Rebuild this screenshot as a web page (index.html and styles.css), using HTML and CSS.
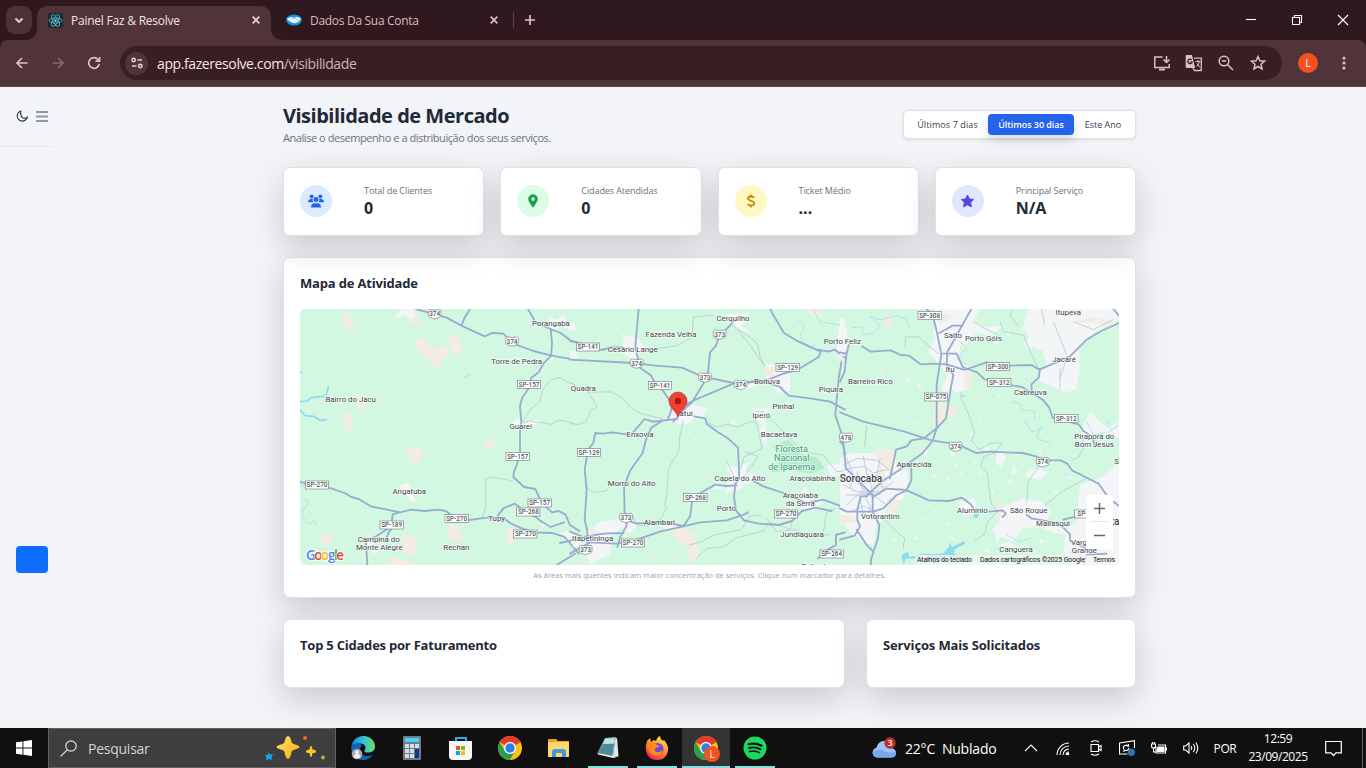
FILE: index.html
```html
<!DOCTYPE html>
<html lang="pt-BR">
<head>
<meta charset="utf-8">
<title>Painel Faz &amp; Resolve</title>
<link rel="stylesheet" href="styles.css">
</head>
<body>
<svg width="0" height="0" class="defs">
  <defs>
    <symbol id="chrome" viewBox="0 0 24 24">
      <circle cx="12" cy="12" r="12" fill="#fbc116"/>
      <path d="M12 12 1.600 6A12 12 0 0 1 22.400 6Z" fill="#e33b2e"/>
      <path d="M1.600 6A12 12 0 0 0 11.800 24L17 15 12 12 6.800 15Z" fill="#289f4b"/>
      <path d="M12 6H22.400L12 12Z" fill="#e33b2e"/>
      <circle cx="12" cy="12" r="6" fill="#fff"/>
      <circle cx="12" cy="12" r="4.700" fill="#2f7de9"/>
    </symbol>
    <g id="sh"><path d="M-19-9Q-17-14-13-13Q0-10 13-13Q17-14 19-9Q20 2 18 7Q15 12 9 12L0 15-9 12Q-15 12-18 7Q-20 2-19-9Z"/></g>
    <g id="sp"><rect x="-35" y="-12" width="70" height="24"/></g>
  </defs>
</svg>

<header class="tabs">
  <div class="tab-search"><svg width="10" height="7" viewBox="0 0 10 7"><path d="m1.500 1.500 3.500 3.500 3.500-3.500"/></svg></div>
  <div class="tab active">
    <svg width="15" height="15" viewBox="0 0 15 15"><rect width="15" height="15" rx="2" fill="#20282c"/><g fill="none" stroke="#4fb3cc" stroke-width=".9"><ellipse cx="7.500" cy="7.500" rx="6.500" ry="2.500"/><ellipse cx="7.500" cy="7.500" rx="6.500" ry="2.500" transform="rotate(60 7.500 7.500)"/><ellipse cx="7.500" cy="7.500" rx="6.500" ry="2.500" transform="rotate(120 7.500 7.500)"/></g><circle cx="7.500" cy="7.500" r="1.200" fill="#6fd6ee"/></svg>
    <span class="tab-title t1">Painel Faz &amp; Resolve</span>
    <svg class="x" width="8" height="8" viewBox="0 0 8 8"><path d="m.7.7 6.600 6.600m0-6.600L.7 7.300"/></svg>
  </div>
  <div class="tab second">
    <svg width="16" height="12" viewBox="0 0 16 12"><ellipse cx="8" cy="6" rx="7.800" ry="5.600" fill="#1592eb"/><path d="M.8 4.800 5 3l3 .7L11 2.800l4 1.700-2 3-3.500 1.700-3-.2-3.500-2Z" fill="#eaf6ff"/><path d="m6 5 3-1 4 3" fill="none" stroke="#7cb6e0" stroke-width=".7"/></svg>
    <span class="tab-title t2">Dados Da Sua Conta</span>
    <svg class="x" width="8" height="8" viewBox="0 0 8 8"><path d="m.7.7 6.600 6.600m0-6.600L.7 7.300"/></svg>
  </div>
  <i class="sep"></i>
  <svg class="plus" width="10" height="10" viewBox="0 0 10 10"><path d="M5 0v10M0 5h10"/></svg>
  <div class="win">
    <svg viewBox="0 0 12 12"><path d="M1 5.500h10"/></svg>
    <svg viewBox="0 0 12 12"><path d="M1.500 3.500h7v7h-7zM3.500 3.500v-2h7v7h-2"/></svg>
    <svg viewBox="0 0 12 12"><path d="m1 1 10 10M11 1 1 11"/></svg>
  </div>
</header>

<nav class="toolbar">
  <svg class="nav" viewBox="0 0 16 16"><path d="M13.500 8H3M8 3 3 8l5 5"/></svg>
  <svg class="nav off" viewBox="0 0 16 16"><path d="M2.500 8H13M8 3l5 5-5 5"/></svg>
  <svg class="nav" viewBox="0 0 16 16"><path d="M13.200 9A5.300 5.300 0 1 1 12 4.500L13.500 6M13.600 2v4.200H9.500"/></svg>
  <div class="address">
    <div class="site"><svg width="12" height="12" viewBox="0 0 12 12"><circle cx="2.700" cy="3" r="1.700"/><path d="M6.500 3H11M1 9h4.500"/><circle cx="9.300" cy="9" r="1.700"/></svg></div>
    <span class="url">app.fazeresolve.com<span>/visibilidade</span></span>
    <div class="actions">
      <svg viewBox="0 0 18 18"><path d="M9.500 3H1.800v10.500h14.400V10M13.500 2v6M10.500 5.500l3 3 3-3"/><path d="M6 15.500h6" stroke-width="2"/></svg>
      <svg viewBox="0 0 18 18"><path d="M1.500 1H7l3.200 13H1.500Q.7 14 .7 13V2Q.7 1 1.500 1Z" fill="#d8c2c5" stroke="none"/><path d="M9 4.200h7.300v12.300H9.500L8 14" stroke-width="1.300"/><path d="M6.600 5.800A2.200 2.200 0 1 0 7.200 8H5.200" stroke="#381f24" stroke-width="1.200"/><path d="M10.500 7.500h5M13 6v1.500m1.500 0q-.5 3-3 5m.5-3 3 4" stroke-width="1"/></svg>
      <svg viewBox="0 0 18 18"><circle cx="7" cy="7" r="4.800"/><path d="m10.500 10.500 5.500 5.500M4.800 7h4.400"/></svg>
      <svg viewBox="0 0 18 18"><path d="m9 2.500 1.900 4.300 4.700.4-3.600 3.100 1.100 4.700L9 12.500 4.900 15 6 10.300 2.400 7.200l4.700-.4Z"/></svg>
    </div>
  </div>
  <div class="avatar">L</div>
  <svg class="dots" width="4" height="14" viewBox="0 0 4 14"><circle cx="2" cy="2" r="1.600"/><circle cx="2" cy="7" r="1.600"/><circle cx="2" cy="12" r="1.600"/></svg>
</nav>

<div class="page">
  <aside>
    <div class="side-top">
      <svg width="12" height="12" viewBox="0 0 12 12" fill="none" stroke="#29303c" stroke-width="1.100"><path d="M4.800.9A5.200 5.200 0 1 0 11.400 7.300Q9 8.700 7 8Q4 6.500 4.800.9Z"/></svg>
      <svg width="12" height="11" viewBox="0 0 12 11" stroke="#8e99ab" stroke-width="1.900"><path d="M0 1h12M0 5.500h12M0 10h12"/></svg>
    </div>
    <div class="blue"></div>
  </aside>
  <main>
    <div class="head">
      <div><h1>Visibilidade de Mercado</h1><p>Analise o desempenho e a distribuição dos seus serviços.</p></div>
      <div class="range"><span>Últimos 7 dias</span><span class="on">Últimos 30 dias</span><span>Este Ano</span></div>
    </div>
    <section class="stats">
      <div class="card stat"><div class="ic blue-ic"><svg width="16" height="14" viewBox="0 0 16 14" fill="#2563eb"><circle cx="3.600" cy="2.400" r="2"/><circle cx="12.400" cy="2.400" r="2"/><circle cx="8" cy="5.500" r="2.500"/><path d="M0 8.300C0 6 1.300 5 3 5h1.700Q4.200 7 5.600 8.300ZM16 8.300C16 6 14.700 5 13 5h-1.700q.5 2-.9 3.300ZM3 13.500c0-3 1.400-4.300 3.300-4.300h3.400c1.900 0 3.300 1.300 3.300 4.300Z"/></svg></div><div><p>Total de Clientes</p><b>0</b></div></div>
      <div class="card stat"><div class="ic green-ic"><svg width="10" height="14" viewBox="0 0 10 14"><path fill="#16a34a" fill-rule="evenodd" d="M5 .3A4.800 4.800 0 0 1 9.800 5C9.800 7.500 7 11 5 13.800 3 11 .2 7.500.2 5A4.800 4.800 0 0 1 5 .3Zm0 3a1.800 1.800 0 1 0 0 3.600 1.800 1.800 0 0 0 0-3.600Z"/></svg></div><div><p>Cidades Atendidas</p><b>0</b></div></div>
      <div class="card stat"><div class="ic yellow-ic"><svg width="10" height="14" viewBox="0 0 10 14" fill="none" stroke="#ca8a04" stroke-width="1.800"><path d="M5 .5v2M5 11.500v2M8.300 3.500C6 2 2 2 2 4.600S8.300 6.500 8.300 9.200 4 12 1.500 10.300"/></svg></div><div><p>Ticket Médio</p><b>...</b></div></div>
      <div class="card stat"><div class="ic indigo-ic"><svg width="15" height="14" viewBox="0 0 15 14"><path fill="#4f46e5" stroke="#4f46e5" stroke-linejoin="round" d="m7.500 1 1.900 3.900 4.300.6-3.100 3 .8 4.300-3.900-2-3.900 2 .8-4.300-3.100-3 4.300-.6Z"/></svg></div><div><p>Principal Serviço</p><b>N/A</b></div></div>
    </section>
    <section class="card map-card">
      <h2>Mapa de Atividade</h2>
      <svg class="map" viewBox="300 309 819 256">
        <rect x="300" y="309" width="819" height="256" fill="#d3f8e2"/>
        <g transform="translate(300 305) scale(.33333)">
          <path class="tan" d="M126 30q10-12 24 0l10 24q8 26-10 26-14-6-24-36ZM345 112q4-16 26-12 15 10 25 32l14-4q10-10 24-6l12 12q-4 20-18 34-10 20-24 18-14-26-30-30-22-16-29-24ZM446 95q14-10 30 0l10 30q-10 30-24 26l-10-24ZM174 275q20-14 26 2l-8 42q-16 8-20-8ZM128 328q20-10 32 10-8 30 0 38l-18 2q-16-26-14-50ZM320 430l40-2 10 26-28 30q-22-14-22-54ZM542 426l26-32 24 40-22-6ZM66 690q14-10 32 2-4 32-24 34-20-20-8-36ZM448 658l30 5 4 24 14 10-40 16-12-20ZM304 690q40-4 50 16 0 40-18 50l-24-12ZM618 670h24v48h-24ZM260 780l20-30 20 16 30 0 12 14ZM320 12h24l18 46-34-6Z"/>
          <path class="urban" d="M284 34 310 10h26l10 24-24 6-10-10-20 10ZM302 540l20-6 14 20 10 34-14 2-12-22-22-4ZM196 702q30 10 42 36l-18 8-22-20ZM746 36l24 8 20-14 10 20 25 4v24l-44-14-26 14ZM744 150h16v16h-16ZM648 342l24 10 44-8 2 12-44 8-16 16-24-20ZM780 684l22-6 20 10v30l-24-12ZM724 658l24-4 4 8-24 4Z"/>
          <path class="water" d="M0 290l22-2 12-10 36-4 10-8 5-20M0 314l16 18 24 2 20 12 20-2M0 204l6-2"/>
          <path class="creek" d="M0 545l20-4 20 6M10 580l14 8-6 20-12 4 4 26 18 20 14-10 10 14"/>
          <path class="minor" d="M665 355l28-44 26-20 10-38 22-28 30-8 20 14 24 8M670 355l20-8 14 4 30 3 20 4 20-12 30 4 20 6M545 640l12-30V522l20-5 40 6 20 6M494 218l16-8"/>
          <path class="road" d="M348 12 440 38 484 62 554 94 576 84 610 86 640 116 700 138 755 152 825 164M510 12 494 38 484 62M684 12 708 54 752 72 756 112 754 150M752 72l30 12 32 24 14 4M754 152l-24 24-14 26-22 16-8 32-20 30-6 24 4 48-4 26 0 66-10 36-8 20-2 16 32 30 34 6 18 40 32 30 20-4 20 10 14 32 28 18M0 530l18 6 68 12 48 16 20 12 22 6 36 22 50 10 38 8 34-8 40 4 40-4 24 4 22 18 40 10 60-8 46-2 24 18 30 14 40 14 56 2 38 12 42 50M298 622l-20 6-4 36-36 24-40 24 4 66M260 698l6-16 14-18M592 634l18-24 34-14 40 30 24 10 14 12 30 18 40-14M770 780l55-34M780 714l45-10" />
        </g>
        <g transform="translate(570 305) scale(.33333)">
          <path class="urban" d="M154 88l50 10 24 36-20 10-10 28-14-12-40-22 18-26ZM0 138h24v24H0ZM466 28l74-4-26 38 42 30-50-20ZM586 178h44l4 18 26 8v54h-24l-10 10-20-30-26-6-60 26 0-14 66-24ZM810 40h15v130l-26-28ZM300 330l14-26 56-4 44 10-14 20-26 8-20 20-68-6ZM480 510l-14-34 36 14 34-20-10 28 34 14-20 24-20 0 0 12-52 16ZM590 430l-24-50 10-16-14-20-4-16 26-14 4 30ZM88 652l50-10 30 10-40 40-8 56-24 10-36 20-14-40-40-14ZM680 590l24-46 28 30 26 18-30 28-40-10ZM276 664l44-4 6 14-30 6ZM432 540l30 0 2 12-30 0ZM770 480l55-6v40l-44-4ZM150 664l60-20-30 44ZM500 640l20-10 6 8ZM480 350l16-4-4 14ZM442 394l28-14-8 14ZM540 310l60 0-20 24ZM640 460l30-10-5 14ZM370 400l12 0-4 10Z"/>
          <path class="tan" d="M308 676l42-8 30 28 4 60-30 22 0-50-40-26ZM586 186l28-2 0 30-24 0ZM700 12h44l16 30-30-10ZM792 150l30 8v20ZM30 780l10-18 16 18ZM40 664l50 16-12 20Z"/>
          <path class="park" d="M612 424l40-20 20 14 20 30 50 10 22 32-40 16-60-10-60 6 24-34Z"/>
          <path class="creek" d="M684 44l20 20-14 30 30 40 20-20M730 14l20 36 60 10"/>
          <path class="minor" d="M490 60 540 120 560 150 582 180M504 72l58 42 8 40 14 30M0 232l24 14 34 15 68 0 34 20 20 26 36 20 60 14M340 350l-10 40-4 50-30 50-6 80-6 30 6 10-20 34-40 20-30-6-12-26-24-10M410 350l30 16 34-8 26 8 44-16 14 0 8 30 10 50-54 26-10 34M560 320l20 0 60 60 60 60 60 10 40 50 65-8M0 356l28 2 20-8 14-34 20-10-30-48M370 36l60-6M370 36l-4 60-44 26-100 14M524 440l40 14-40 60M44 540l24 22 40-4 16-20-14-10M358 720l36-10 40-20 80-16 24-40 34-4M380 760l30-30 50-4 40-28 80-20 20-26 60 20 10-36M470 470l20 40M590 640l30 40 60-6 40 24 60-10M760 680l10-60 26-10"/>
          <path class="road" d="M0 164l190 10 66 8 80 6 60 26 94 20 90-4 60-24 40-10 66-40 6-16-74-34-36-22-30-50-12-24M0 108l24 5 70 22 30-8 34 0M206 12l-4 44-6 70 14 62 34 24 14 30 22 16 26 40-4 24-10 24 M490 50l-14 16-28 26-10 30-18 20-6 60-14 34-34 56-16 14-40 44M342 302l30-16 118-50 80-10 60 20 26 26 64 8 60 10 45 24M372 334l34 6 4 16 34 26 30 18 30 28 4 90-12 18-4 40 6 40 24 30 44 10 60 4 40-12 30-30 40-10 49 10M548 526l32 18 60 20 70 30 50-10 65 24M322 342l-74 8-24-8-40 46-14 0-42-6-28 4-24-2-6 30-16 20-10 60 6 60-6 90 8 34 0 40M276 348l-32 20-16 36-10 40-36 50-20 50 2 80 6 38-20 36-8 28M0 746l60-34 80 4 60-12 70-24 70-16 50-12 80-6 50-16 14-8M168 645l30 10 86-2 56 10 20-28 6-44 30-30 40-22 30 4 34-2M745 134l30 6 20-6 30 24M820 140l-14 80-10 110 20 60 9 60M744 760l20-20 34-20 0-30 27-8M0 680l40 16 60-10 60-2"/>
        </g>
        <g transform="translate(840 305) scale(.33333)">
          <path class="urban" d="M0 60l20 10 4 60-10 20-14-8ZM280 12h140l-20 34 30 20 60-4-40 30-40-10-30 34-20 8 0 40 34 30 0 54-44 14-16-10-12 20-18-24 20-36-34-44-26-26 20-40ZM566 12H837v30l-90 50-30 40 2 60-10 60-30 10-60-24-20-10 0-30 20-20-10-40-60-20 20-20-20-30ZM0 460l30-16 70 0 20-10 40 4 12 40 30 20 4 40-20 50-40 10-20 50-40 10-10 40-40-8-36-50ZM720 540l60-20 57-50v310H700l-30-40 10-70 30-20ZM480 610l66-30 60 10 26 30-16 44 60-4 6 34-80-26-50 0-30 40-40-12-10 20-14-44 20-20ZM354 590l50-10 6 40-40 14ZM474 430l24 24-14 36-18-20ZM520 480l14 20-20 10ZM556 504l32-14 34 10-20 24-40-6ZM340 480l14 0-8 10ZM276 510l10 10 0-14ZM250 430l16 6-12 20ZM430 430l10-14 16 30ZM330 434l16 12-10 12ZM364 570l16 2-6 12ZM730 360l20-40 50 50 37-20v50l-70-20-36 40ZM500 530l20-10-10 20ZM390 380l12 10-16 6ZM230 40l20-14 16 10ZM470 720l40-10 20 20ZM40 640l70 10-10 70-40-10ZM196 220l20 6-10 8ZM230 240l16 0-6 12Z"/>
          <path class="specks" d="M420 330l6 8-8 2ZM230 470l12 4-8 6ZM300 455l8 2-4 8ZM240 540l10-4 2 8ZM320 520l14-6-6 12ZM360 500l8 6-10 4ZM400 470l12-2-6 10ZM420 500l10 8-10 4ZM450 560l10-8 2 12ZM410 540l8 0-4 8ZM120 200l10 2-6 8ZM60 180l8 2-6 6ZM160 330l10 0-6 8ZM200 380l14 2-8 6ZM230 350l8 6-10 2ZM70 320l8 4-8 4ZM440 230l14 4-8 8ZM470 270l12-4 0 10ZM500 80l14 6-10 10ZM540 70l10-2 2 12ZM460 110l14-4-4 12ZM560 120l14 10-14 2ZM490 150l10-4 2 8ZM550 210l8 4-8 6ZM250 640l12 4-12 6ZM220 700l14-6-2 12ZM160 700l10 6-12 6ZM280 620l8-6 4 10ZM320 650l10 6-10 4ZM330 700l12-4 2 8ZM430 740l14-10 4 14ZM600 700l14 8-14 8ZM570 740l10-10 8 12ZM640 560l16-6-6 14ZM680 520l10-10 6 12ZM630 470l12-2-6 10ZM530 440l10 8-10 6ZM590 440l14-6-2 12Z"/>
          <path class="tan" d="M126 30l30 0 4 40-24-14ZM296 24h24l20 16-40 14ZM376 198l20 6v50l-24-10ZM286 284l30 20 44 6-20 24-32 6 0 30-30-20ZM96 440l50-10 20 10-14 70-24-30ZM120 470l20 50-16 50-28-20ZM142 580l40 4-8 30-30 20ZM0 630l40 4 16 20-40 0-16 8ZM700 50l60-14 60 14 10 24-60-20ZM474 580l16 40-16 30-10-30ZM680 740l30-10-4 24ZM370 620l20 10-14 10ZM0 140l10 6v30l-10-16Z"/>
          <path class="waterfill" d="M184 750l20-10 4 16 44-10 30 2 30-4 16-20 0-14 8 16 36-18 4 8-30 16-6 12 24 16-20 4-20-12-20 8-10 16-16 0 0-20-30-8-20 14-30-2-6 16H190ZM398 636l8-10 12 2-6 10Z"/>
          <path class="creek" d="M40 68l26-2 4 24 30-6 20-20-30-30 30 10 50-12 30 10 10 30M360 110l20 20-30 30 30 20M518 290l20 4 10 20 36 6 0 20M556 350l20 30 30-10M600 370l-10 30 40 14M740 350l20 40 50-10 27-20M800 350l14 24 20-14M500 690l40 20 30-10"/>
          <path class="minor" d="M196 126l0-30 40 0 30 26 30 24M360 264l14 10-14 0 24 50 20 60-10 24 24 26 34-20 34 0-20 30-34 10-10 30 20 20 8 66 4 28 20 20-30 30-10 40-30 20M480 50l10 30 60 10 30 70 14 30M560 590l4-60 24-34 20-24M696 466l20-10 14-24 0-30M616 600l50-40 74-40M400 50l34 20 40 20-20 24M80 364l-6 60M130 640l30 30 34 30-4 30M640 50l20 50 20 50M700 50l60 24 60-30M680 160l-20 60M604 10l10 50M520 12l-10 20 24 30M660 190l0 60"/>
          <path class="street" d="M0 500l30-10 40-6 30 20 40-10M10 540l40 20 70 0 40-30M20 600l40-36 60 4M50 500l20 64 20 40 0 30M70 454l10 50 20 60M20 570l80 0 40 30M40 520l60 60M10 480l40-20 60 6 40 30M10 520l30-10 30 20 40-10M20 460l20 50-10 40M120 460l-10 50 20 40M30 620l40-16 30 10M60 580l10 50"/>
          <path class="road" d="M260 12l20 26 10 40 14 70-14 90 0 130-12 40-30 36-60 44-60 40-46 42M394 12 376 44 354 84 334 120 322 140 320 180 340 210 334 240 318 340 290 370 252 400 214 406 200 424 168 434 164 456 150 520M298 84l40-22 30 0M310 146l40 0 18 40 14 6M0 322l70 28 124 30 80 26 80 12 54 26 40-4 100 4 40 10 20 12 54 0 20 10 14 20 40 20 40 20 28 40M66 124l26 16 60-4 30 14 26 2 34 26 40-2 38 2 50 16 18-2M382 192l40-14 18-6 60 10 74-2 24 14 92-40 50-50 44-26 53-24M600 192l-4 26-22 20 2 26 32 20 20 24 10 30 78 20 14 20 26 16 10 32M382 192l30 10 20 20 14 6 40 8 60 10 30 18M0 410l10 10 8 70 30 30 50 50 0 50 20 40-4 40-20 60-6 60M82 574l-20 0-10 40 0 30 8 20-16 28-44 12M50 674l30 46 20 20M0 610l20 10 80 0 30-10 40-40 30-14 36 16 30 14 60 2 40-10 26 20 14 20M448 620l40-4 10 10-10 10M100 575l40-24 60 4 14-30 0-40-30-10M560 630l14 10 76 14 20 14 20 20 0 20 54 24M0 142l20 4 6-26M20 140l-6 60-14 30M670 644l80-20M820 12l17 20M730 780l10-30 60-4M820 590l17 12"/>
        </g>
        <g class="shield" transform="translate(300 305) scale(.33333)">
          <use href="#sh" x="404" y="27"/><use href="#sh" x="636" y="109"/><use href="#sp" x="687" y="238"/><use href="#sp" x="653" y="454"/><use href="#sp" x="719" y="594"/><use href="#sp" x="685" y="621"/><use href="#sp" x="676" y="687"/><use href="#sp" x="470" y="641"/><use href="#sp" x="275" y="660"/><use href="#sp" x="51" y="540"/>
          <use href="#sp" x="864" y="126"/><use href="#sh" x="1010" y="175"/><use href="#sh" x="1259" y="88"/><use href="#sp" x="1080" y="242"/><use href="#sh" x="1215" y="217"/><use href="#sh" x="1322" y="239"/><use href="#sp" x="1463" y="188"/><use href="#sp" x="867" y="442"/><use href="#sp" x="1186" y="578"/><use href="#sh" x="978" y="638"/><use href="#sh" x="857" y="734"/><use href="#sp" x="999" y="714"/><use href="#sp" x="1458" y="627"/><use href="#sp" x="1595" y="747"/>
          <use href="#sp" x="1889" y="32"/><use href="#sp" x="2094" y="184"/><use href="#sp" x="2098" y="232"/><use href="#sp" x="1908" y="276"/><use href="#sh" x="1638" y="397"/><use href="#sh" x="1967" y="424"/><use href="#sh" x="2228" y="471"/><use href="#sp" x="2299" y="341"/><use href="#sp" x="2359" y="627"/>
        </g>
        <g class="num" transform="translate(300 312) scale(.33333)">
          <text x="404" y="13">374</text><text x="636" y="95">374</text><text x="687" y="224">SP-157</text><text x="653" y="440">SP-157</text><text x="719" y="580">SP-157</text><text x="685" y="607">SP-268</text><text x="676" y="673">SP-270</text><text x="470" y="627">SP-270</text><text x="275" y="646">SP-189</text><text x="51" y="526">SP-270</text>
          <text x="864" y="112">SP-141</text><text x="1010" y="161">374</text><text x="1259" y="74">373</text><text x="1080" y="228">SP-141</text><text x="1215" y="203">373</text><text x="1322" y="225">374</text><text x="1463" y="174">SP-129</text><text x="867" y="428">SP-129</text><text x="1186" y="564">SP-268</text><text x="978" y="624">373</text><text x="857" y="720">373</text><text x="999" y="700">SP-270</text><text x="1458" y="613">SP-270</text><text x="1595" y="733">SP-264</text>
          <text x="1889" y="18">SP-308</text><text x="2094" y="170">SP-300</text><text x="2098" y="218">SP-312</text><text x="1908" y="262">SP-075</text><text x="1638" y="383">478</text><text x="1967" y="410">374</text><text x="2228" y="457">374</text><text x="2299" y="327">SP-312</text><text x="2347" y="613">SP-</text>
        </g>
        <g class="label" transform="translate(300 305) scale(.33333)">
          <text x="753" y="64">Porangaba</text><text x="650" y="176">Torre de Pedra</text><text x="152" y="292">Bairro do Jacu</text><text x="662" y="373">Guareí</text><text x="328" y="566">Angatuba</text><text x="590" y="649">Tupy</text><text x="236" y="711">Campina do</text><text x="238" y="735">Monte Alegre</text><text x="469" y="735">Rechan</text>
          <text x="1299" y="47">Cerquilho</text><text x="1113" y="96">Fazenda Velha</text><text x="998" y="140">Cesário Lange</text><text x="850" y="258">Quadra</text><text x="1401" y="238">Boituva</text><text x="1593" y="262">Piquira</text><text x="1450" y="311">Pinhal</text><text x="1384" y="338">Iperó</text><text x="1437" y="395">Bacaetava</text><text x="1152" y="334">Tatuí</text><text x="1020" y="397">Enxovia</text><text x="995" y="543">Morro do Alto</text><text x="1320" y="529">Capela do Alto</text><text x="1537" y="529">Araçoiabinha</text><text x="1501" y="579">Araçoiaba</text><text x="1501" y="602">da Serra</text><text x="1279" y="617">Porto</text><text x="1078" y="659">Alambari</text><text x="878" y="709">Itapetininga</text><text x="1506" y="697">Jundiaquara</text><text x="1627" y="117">Porto Feliz</text>
          <text x="2305" y="30">Itupeva</text><text x="1959" y="100">Salto</text><text x="2050" y="107">Porto Góis</text><text x="1950" y="202">Itu</text><text x="1711" y="238">Barreiro Rico</text><text x="2292" y="171">Jacaré</text><text x="2191" y="270">Cabreúva</text><text x="2383" y="401">Pirapora do</text><text x="2383" y="425">Bom Jesus</text><text x="1842" y="487">Aparecida</text><text x="1741" y="641">Votorantim</text><text x="2017" y="625">Alumínio</text><text x="2186" y="625">São Roque</text><text x="2259" y="663">Mailasqui</text><text x="2148" y="741">Canguera</text><text x="2337" y="721">Varg</text><text x="2353" y="745">Grande</text><text x="2450" y="476">S</text><text x="2445" y="660" class="big">ta</text>
          <text x="1683" y="531" class="big">Sorocaba</text>
          <g class="forest"><text x="1475" y="441">Floresta</text><text x="1475" y="468">Nacional</text><text x="1475" y="496">de Ipanema</text></g>
          <text x="1546" y="792">Salto de</text>
        </g>
        <path d="M678 417c-1.500-6-9-9-9-16a9 9 0 0 1 18 0c0 7-7.500 10-9 16Z" fill="#ea4335" stroke="#c5221f" stroke-width=".6"/><circle cx="678" cy="401" r="3.200" fill="#b31412"/>
        <rect x="915" y="555" width="204" height="10" fill="#f5f5f5" opacity=".7"/>
        <g class="credits"><text x="917" y="562.300" textLength="55">Atalhos do teclado</text><text x="980" y="562.300" textLength="105">Dados cartográficos ©2025 Google</text><text x="1093" y="562.300" textLength="22">Termos</text></g>
        <g class="google"><text x="306" y="559.500" textLength="38"><tspan fill="#4285f4">G</tspan><tspan fill="#ea4335">o</tspan><tspan fill="#fbbc04">o</tspan><tspan fill="#4285f4">g</tspan><tspan fill="#34a853">l</tspan><tspan fill="#ea4335">e</tspan></text></g>
        <rect x="1086" y="495" width="27" height="54" rx="1" fill="#fff"/>
        <path d="M1090 521.500h19" stroke="#e6e6e6"/><path d="M1094 508.500h11M1099.500 503v11M1094 535.500h11" stroke="#666" stroke-width="1.500"/>
      </svg>
      <p class="note">As áreas mais quentes indicam maior concentração de serviços. Clique num marcador para detalhes.</p>
    </section>
    <section class="bottom">
      <div class="card"><h2>Top 5 Cidades por Faturamento</h2></div>
      <div class="card"><h2>Serviços Mais Solicitados</h2></div>
    </section>
  </main>
</div>

<footer class="taskbar">
  <div class="start"><svg width="16" height="16" viewBox="0 0 16 16" fill="#fff"><path d="M0 2.300 6.500 1.400V7.600H0ZM7.400 1.200 16 0V7.600H7.400ZM0 8.500H6.500V14.700L0 13.800ZM7.400 8.500H16V16L7.400 14.800Z"/></svg></div>
  <div class="search">
    <svg width="17" height="17" viewBox="0 0 17 17" fill="none" stroke="#e4e4e4" stroke-width="1.200"><circle cx="11" cy="6" r="5.200"/><path d="M7.200 9.800.7 16.300"/></svg>
    <span>Pesquisar</span>
    <svg class="spark" width="62" height="26" viewBox="0 0 62 26"><defs><linearGradient id="gold" x1="0" y1="0" x2="1" y2="1"><stop stop-color="#ffe06a"/><stop offset="1" stop-color="#f5ad12"/></linearGradient></defs><path d="M24 1q2.300 0 3.500 6 .6 1.500 2 2 6 1.500 6 3t-6 3q-1.400.5-2 2Q26.300 24 24 24t-3.500-7q-.6-1.500-2-2-6-1.500-6-3t6-3q1.400-.5 2-2Q21.700 1 24 1Z" fill="url(#gold)"/><path d="M47 11q1 0 1.500 3.500Q52 15 52 16.500T48.500 18Q48 22 47 22t-1.500-4Q42 18 42 16.500t3.500-2Q46 11 47 11Z" fill="#fcc52c"/><path d="m4 17 2 2.500 3-.5-1.500 3 .5 3-3-1-3 1.500.5-3L1 20l3-.3Z" fill="#16a5ee"/><circle cx="41" cy="3" r="2" fill="#f26727"/><circle cx="59" cy="22.500" r="2" fill="#84c440"/></svg>
  </div>
  <div class="apps">
    <div><svg viewBox="0 0 24 24"><defs><linearGradient id="edge"><stop stop-color="#1588d8"/><stop offset=".5" stop-color="#2fc2df"/><stop offset="1" stop-color="#70e05f"/></linearGradient></defs><path d="M.5 10C2 3.500 7-.2 12.800.1 19.500.4 24 5 24 10.500c0 4-3 6-7 6-3.500 0-4.500-1.200-3-3 1.500-2 .2-6-5-6C5 7.500 2 8 .5 10Z" fill="url(#edge)"/><path d="M.5 10C3 6 9 6.500 11 9.500 7 12 9 20.500 17 20c2 0 4-.8 5.500-1.800C20 22 16 24 12 24 4 24-.8 17 .5 10Z" fill="#1267b4"/><circle cx="6" cy="18" r="5.300" fill="#a8a8a8"/><circle cx="6" cy="16.200" r="2" fill="#eee"/><path d="M2.500 21q0-3 3.500-3t3.500 3Q6 24 2.500 21Z" fill="#eee"/></svg></div>
    <div><svg viewBox="0 0 24 24"><rect x="3" width="18" height="24" rx="1" fill="#717c88"/><rect x="5" y="2" width="14" height="4" fill="#45d4f8"/><path d="M5 8h4v4H5zM10 8h4v4h-4zM15 8h4v4h-4zM5 13h4v4H5zM10 13h4v4h-4zM5 18h4v4H5zM10 18h4v4h-4z" fill="#d5dde5"/><path d="M15 13h4v9h-4z" fill="#063f86"/></svg></div>
    <div><svg viewBox="0 0 24 24"><path d="M7 6V2h10v4" fill="none" stroke="#29aee7" stroke-width="2"/><path d="M0 5h23v15q0 4-4 4H4q-4 0-4-4Z" fill="#f7f7f7"/><path fill="#f25022" d="M7 10h4v4H7z"/><path fill="#7fba00" d="M12 10h4v4h-4z"/><path fill="#00a4ef" d="M7 15h4v4H7z"/><path fill="#ffb900" d="M12 15h4v4h-4z"/></svg></div>
    <div><svg viewBox="0 0 24 24"><use href="#chrome"/></svg></div>
    <div><svg viewBox="0 0 24 24"><path d="M1 3h8l2 2h11v16H1Z" fill="#e6a316"/><path d="M1 6h21v15H1Z" fill="#ffd669"/><path d="M5 21v-5q0-3 3-3h8q3 0 3 3v5h-4v-4H9v4Z" fill="#3c9ade"/></svg></div>
    <div class="run"><svg viewBox="0 0 24 24"><path d="M9 2 19.500 1 17 20 1.500 17Z" fill="#8fc3cd"/><path d="m7 8-5.500 9L16 20l2-12Z" fill="#4d8b99"/><path d="m9 3 9.500-.5L18 7 7.500 8Z" fill="#c2e4e8"/><path d="m19.500 1 1.700 2 1.300 17.500L17 20Z" fill="#dfe9ea"/><path d="m1.500 17 15.500 3 5.500.5-5 1.500L2 18.500Z" fill="#eee"/></svg></div>
    <div class="run"><svg viewBox="0 0 24 24"><defs><linearGradient id="fox" x1=".8" y1="0" x2=".2" y2="1"><stop stop-color="#fff14a"/><stop offset=".5" stop-color="#ff8729"/><stop offset="1" stop-color="#ef1769"/></linearGradient></defs><path d="M2 5 5 2l1 4 3-2 2 1Q12 1 15 0q0 3 3 5l1-1q5 6 4 11-2 9-11 9T1 15Q0 10 2 5Z" fill="url(#fox)"/><circle cx="12.500" cy="13" r="6" fill="#7543e5"/><path d="m2 7 6-1 4 3 3 1-4 2q-2 1-1 3 3 3 7-1 0 6-6 6Q3 19 2 7Z" fill="#ff8b1a"/></svg></div>
    <div class="run current"><svg viewBox="0 0 24 24"><use href="#chrome"/></svg><b>L</b></div>
    <div class="run"><svg viewBox="0 0 24 24"><circle cx="12" cy="12" r="11.500" fill="#1ed760"/><g fill="none" stroke="#111" stroke-linecap="round"><path d="M5.500 8.300q7-2 13 1.400" stroke-width="2.200"/><path d="M6 12q6-1.700 11.500 1.300" stroke-width="1.900"/><path d="M6.500 15.500q5.500-1.300 10 1.200" stroke-width="1.500"/></g></svg></div>
  </div>
  <div class="tray">
    <div class="weather"><svg width="26" height="22" viewBox="0 0 26 22"><path d="M6 20.500a5 5 0 0 1-.5-9.800C7 5.500 10 4 13.500 4 18 4 20 8 20.500 11q4.500 1 4.500 5 0 4.500-5 4.500Z" fill="#9dc2f8"/><path d="M1.500 15Q8 11 13 14t12 1q0 5.500-5 5.500H6Q1.500 20 1.500 15Z" fill="#7ba5ec"/><circle cx="19" cy="6" r="5.700" fill="#c42b1f"/></svg><em>3</em></div>
    <span class="temp">22°C&nbsp; Nublado</span>
    <i><svg viewBox="0 0 16 16"><path d="m2 11 6-6 6 6"/></svg></i>
    <i><svg viewBox="0 0 16 16"><path d="M2 15A12 12 0 0 1 14 3M5 15a9 9 0 0 1 9-9M8 15a6 6 0 0 1 6-6M11 15a3 3 0 0 1 3-3"/><circle cx="13" cy="14" r=".8"/></svg></i>
    <i><svg viewBox="0 0 16 16"><path d="M4 4.500h7.500v7H4zM11.500 7 14 5.500v5L11.500 9M4 2q4-2.500 8 0M4 14q4 2.500 8 0"/></svg></i>
    <i><svg viewBox="0 0 16 16"><path d="M8.500 14H.5V3L15.500.7V8M4.500 9V6.500Q7 4 9.500 6V4M9.500 6H7.500M10 8q-1 3.500-5 2V12"/><circle cx="12.300" cy="12.300" r="3.600" fill="#2b77c2" stroke="none"/></svg></i>
    <i><svg viewBox="0 0 16 16"><path d="M5 6.500V13h9.500V5H7M15.500 7.500v3M.5 4h4v2q0 2-2 2t-2-2ZM1.500 2v2M3.500 2v2M2.500 8v4H5"/><path d="M7 7h6v4.500H6Z" fill="#fff"/></svg></i>
    <i><svg viewBox="0 0 16 16"><path d="M.7 6h2L6 3v10L2.700 10h-2ZM8 6q1.500 2 0 4M10.300 4q3 4 0 8M12.800 2.500q4 5.500 0 11"/></svg></i>
    <span class="por">POR</span>
    <div class="clock"><span>12:59</span><span>23/09/2025</span></div>
    <svg class="notif" width="17" height="17" viewBox="0 0 17 17"><path d="M.7 1.500h15.600v11.300h-5.300L8.500 15.500 6 12.800H.7Z"/></svg>
    <u></u>
  </div>
</footer>
</body>
</html>
```
FILE: styles.css
```css
* { box-sizing: border-box; }
body { margin: 0; width: 1366px; height: 768px; overflow: hidden; display: flex; flex-direction: column; background: #30191e; font-family: "Open Sans", "Noto Sans", sans-serif; color: #1f2937; }
h1, h2, p { margin: 0; }
svg { display: block; flex: none; }
.defs { position: absolute; }

/* tab strip */
.tabs { height: 40px; flex: none; background: #30191e; display: flex; align-items: center; padding-left: 6px; }
.tab-search { width: 26px; height: 28px; border-radius: 9px; background: #4c3338; display: flex; align-items: center; justify-content: center; }
.tab-search svg, .x { fill: none; stroke: #e9d3d6; stroke-width: 1.800; }
.tab { display: flex; align-items: center; font-size: 12px; white-space: nowrap; flex: none; }
.tab.active { width: 234px; height: 34px; margin: 6px 0 0 5px; padding: 0 11px 6px 11px; background: #503439; border-radius: 10px 10px 0 0; color: #f2e3e5; position: relative; }
.tab.active::before, .tab.active::after { content: ""; position: absolute; bottom: 0; width: 10px; height: 10px; }
.tab.active::before { left: -10px; background: radial-gradient(circle at 0 0, transparent 9.500px, #503439 10px); }
.tab.active::after { right: -10px; background: radial-gradient(circle at 100% 0, transparent 9.500px, #503439 10px); }
.tab-title { margin-left: 8px; flex: 1; }
.t1 { letter-spacing: -.23px; }
.t2 { letter-spacing: -.3px; }
.tab.second { width: 221px; margin-left: 14px; padding: 0 0 0 1px; color: #dfb7be; }
.second .x { stroke: #dfb7be; margin-right: 8px; }
.sep { width: 1px; height: 16px; flex: none; background: #5d3f45; margin-left: 7px; }
.plus { margin-left: 11px; stroke: #e5bdc4; stroke-width: 1.700; }
.win { margin-left: auto; display: flex; gap: 34px; padding-right: 17px; }
.win svg { width: 12px; height: 12px; fill: none; stroke: #fff; stroke-width: 1.100; }

/* toolbar */
.toolbar { height: 47px; flex: none; background: #503439; border-bottom: 1px solid #5d464a; border-radius: 8px 8px 0 0; display: flex; align-items: center; padding: 0 20px 0 14px; }
.nav { width: 16px; height: 16px; margin-right: 20px; fill: none; stroke: #e5bdc4; stroke-width: 1.700; }
.nav.off { stroke: #8b686e; }
.address { width: 1162px; height: 34px; border-radius: 17px; background: #381f24; display: flex; align-items: center; padding: 0 15px 0 5px; margin-left: -2px; }
.site { width: 23px; height: 23px; border-radius: 50%; background: #503439; display: flex; align-items: center; justify-content: center; }
.site svg { fill: none; stroke: #e9d3d6; stroke-width: 1.500; }
.url { margin-left: 9px; font-size: 14px; letter-spacing: -.4px; color: #f4e6e8; flex: 1; }
.url span { color: #cdb6b9; }
.actions { display: flex; gap: 14px; }
.actions svg { width: 18px; height: 18px; fill: none; stroke: #d8c2c5; stroke-width: 1.500; }
.avatar { width: 20px; height: 20px; margin-left: 16px; border-radius: 50%; background: #f4511e; color: #fff; font: 11px/20px "Open Sans", sans-serif; text-align: center; }
.dots { margin-left: auto; fill: #e5bdc4; }

/* page */
.page { height: 641px; flex: none; display: flex; background: #f2f4f8; overflow: hidden; }
aside { width: 283px; display: flex; flex-direction: column; }
.side-top { width: 52px; height: 60px; border-bottom: 1px solid #e4e7eb; display: flex; align-items: center; gap: 8px; padding: 0 0 1px 16px; }
.blue { width: 32px; height: 27px; margin: 399px 0 0 16px; border-radius: 4px; background: #0d6efd; }
main { width: 853px; }
.head { height: 80px; display: flex; justify-content: space-between; }
h1 { margin-top: 16px; font-size: 20px; line-height: 26px; letter-spacing: -.49px; white-space: nowrap; }
.head p { font-size: 11px; line-height: 16px; margin-top: 1px; color: #6b7280; letter-spacing: -.44px; white-space: nowrap; }
.range { width: 233px; height: 29px; margin-top: 23px; border: 1px solid #dee2e6; border-radius: 5px; background: #fff; box-shadow: 0 1px 3px rgba(0,0,0,.1); display: flex; align-items: center; font-size: 9px; font-weight: 500; color: #374151; padding: 3px; }
.range span { height: 21px; line-height: 21px; text-align: center; width: 81px; white-space: nowrap; letter-spacing: .1px; }
.range .on { width: 86px; background: #2563eb; color: #fff; border-radius: 4px; box-shadow: 0 5px 11px rgba(0,0,0,.15); font-weight: 600; letter-spacing: -.05px; }
.range span:last-child { width: 58px; letter-spacing: 0; }
.card { background: #fff; border: 1px solid #dee2e6; border-radius: 7px; box-shadow: 0 11px 33px rgba(0,0,0,.175); }
.stats { display: grid; grid-template-columns: repeat(4, 1fr); gap: 16px; height: 69px; }
.stat { display: flex; align-items: center; padding-left: 16px; }
.ic { width: 32px; height: 32px; border-radius: 50%; display: flex; align-items: center; justify-content: center; margin-right: 32px; margin-top: -1px; }
.blue-ic { background: #dbeafe; } .green-ic { background: #dcfce7; } .yellow-ic { background: #fef9c3; } .indigo-ic { background: #e0e7ff; }
.stat p { font-size: 9px; line-height: 14px; color: #6b7280; white-space: nowrap; letter-spacing: -.08px; }
.stat b { display: block; font-size: 16px; line-height: 21px; margin-bottom: 1px; }
.map-card { height: 341px; margin-top: 21px; padding: 14px 16px 0; }
h2 { font-size: 13px; line-height: 22px; letter-spacing: -.18px; white-space: nowrap; }
.map { width: 819px; height: 256px; margin-top: 15px; border-radius: 5px; }
.note { text-align: center; font-size: 7.500px; line-height: 12px; margin-top: 4px; color: #9ca3af; white-space: nowrap; }
.bottom { margin-top: 21px; display: grid; grid-template-columns: 562px 270px; gap: 21px; height: 69px; }
.bottom .card { padding: 14px 16px; }
.bottom h2 { letter-spacing: -.22px; }
.bottom .card:last-child h2 { letter-spacing: -.14px; }

/* map */
.tan { fill: #f3ece2; } .urban, .specks { fill: #f4f5f7; } .park { fill: #b3edcb; } .waterfill { fill: #90daee; }
.water, .creek, .minor, .street, .road { fill: none; stroke-linejoin: round; stroke-linecap: round; }
.water { stroke: #8fdaf0; stroke-width: 5; }
.creek { stroke: #a4dfeb; stroke-width: 2.500; stroke-dasharray: 14 4; }
.minor { stroke: #b0cfcf; stroke-width: 2.500; }
.street { stroke: #b6c3dc; stroke-width: 2.500; }
.road { stroke: #98accf; stroke-width: 5.500; }
.shield { fill: #fff; stroke: #777d83; stroke-width: 2; }
.num { font: 500 19px Roboto, sans-serif; text-anchor: middle; fill: #4f565c; }
.label { font: 23.500px Roboto, sans-serif; text-anchor: middle; fill: #3d4247; stroke: #fff; stroke-width: 4px; stroke-opacity: .8; paint-order: stroke; }
.label .big { font-size: 30px; font-weight: 500; }
.forest { font-size: 27px; fill: #2e9873; }
.credits { font: 7px Roboto, sans-serif; fill: #111; }
.google { font: 600 13.500px "Open Sans", sans-serif; stroke: #fff; stroke-width: 1.500px; paint-order: stroke; }

/* taskbar */
.taskbar { height: 40px; flex: none; background: #101010; display: flex; color: #fff; }
.start { width: 48px; display: flex; align-items: center; justify-content: center; }
.search { width: 288px; background: #3e3e3e; border: 1px solid #606060; display: flex; align-items: center; padding-left: 11px; }
.search span { margin-left: 11px; font-size: 14px; color: #d4d4d4; flex: 1; letter-spacing: -.25px; }
.spark { margin-right: 9px; }
.apps { display: flex; gap: 1px; margin-left: 3px; }
.apps div { width: 48px; height: 40px; display: flex; align-items: center; justify-content: center; position: relative; }
.apps svg { width: 24px; height: 24px; }
.run::after { content: ""; position: absolute; left: 4px; right: 4px; bottom: 0; height: 2px; background: #86dce3; }
.apps .current { background: #333; }
.current::after { left: 0; right: 0; }
.current b { position: absolute; left: 22px; top: 18px; width: 16px; height: 16px; border-radius: 50%; background: #f4511e; font: 10px/16px "Open Sans", sans-serif; text-align: center; }
.tray { flex: 1; margin-left: 92px; display: flex; align-items: center; }
.weather { width: 34px; position: relative; }
.weather em { position: absolute; left: 16px; top: 0; width: 6px; font: 600 9px/12px "Open Sans", sans-serif; text-align: center; }
.temp { width: 110px; font-size: 14px; letter-spacing: -.2px; white-space: nowrap; }
.tray i { width: 32px; display: flex; justify-content: center; }
.tray i svg { width: 16px; height: 16px; fill: none; stroke: #fff; stroke-width: 1.100; }
.por { width: 36px; text-align: center; font-size: 12px; letter-spacing: -.4px; }
.clock { width: 70px; display: flex; flex-direction: column; align-items: center; font-size: 12px; line-height: 18px; letter-spacing: -.45px; }
.notif { margin-left: 12px; fill: none; stroke: #fff; stroke-width: 1.200; }
.tray u { width: 1px; height: 40px; margin-left: 20px; background: #606060; }
```
